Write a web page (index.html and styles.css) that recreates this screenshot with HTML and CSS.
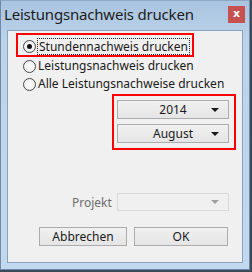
FILE: index.html
```html
<!DOCTYPE html>
<html lang="de">
<head>
   <meta charset="UTF-8">
   <title>Leistungsnachweis drucken</title>
   <link rel="stylesheet" href="styles.css">
</head>
<body>
    <div class="window">
        <!-- Title bar -->
        <div class="titlebar">
            <span class="title">Leistungsnachweis drucken</span>
            <span class="close">x</span>
        </div>

        <div class="client">
            <!-- Report type -->
            <div class="highlight first">
                <label class="option">
                    <span class="radio checked"></span>
                    <span class="focus">Stundennachweis drucken</span>
                </label>
            </div>
            <label class="option">
                <span class="radio"></span>
                <span>Leistungsnachweis drucken</span>
            </label>
            <label class="option">
                <span class="radio"></span>
                <span>Alle Leistungsnachweise drucken</span>
            </label>

            <!-- Period -->
            <div class="highlight period">
                <div class="combo"><span>2014</span><span class="arrow"></span></div>
                <div class="combo"><span>August</span><span class="arrow"></span></div>
            </div>

            <div class="project-row">
                <span class="project-label">Projekt</span>
                <div class="combo disabled"><span></span><span class="arrow"></span></div>
            </div>

            <div class="buttons">
                <button class="btn cancel">Abbrechen</button>
                <button class="btn ok">OK</button>
            </div>
        </div>
    </div>
</body>
</html>
```

FILE: styles.css
```css
* {
    margin: 0;
    padding: 0;
    box-sizing: border-box;
}

body {
    width: 252px;
    height: 272px;
    background-color: #3c4a58;
    font-family: "Noto Sans", sans-serif;
    font-size: 12px;
    color: #1a1a1a;
    overflow: hidden;
}

.window {
    width: 250px;
    height: 270px;
    background: linear-gradient(#a9c4e0, #bcd3ea 40px, #c2d8ee);
    border: 1px solid #6e8aa8;
    border-top-color: #8ea8c4;
    display: flex;
    flex-direction: column;
}

.titlebar {
    height: 29px;
    display: flex;
    align-items: flex-start;
    justify-content: space-between;
    padding: 2px 4px 0 3px;
}

.title {
    font-size: 15px;
    color: #1c1c1c;
    line-height: 22px;
    letter-spacing: -0.2px;
}

.close {
    width: 17px;
    height: 17px;
    margin-top: 3px;
    background-color: #c75050;
    color: white;
    font-family: "DejaVu Sans", sans-serif;
    font-weight: bold;
    font-size: 11px;
    line-height: 15px;
    text-align: center;
}

.client {
    margin: 0 6px 6px 6px;
    flex: 1;
    background-color: #f0f0f0;
    border: 1px solid #8aa4bf;
    padding-top: 2px;
    display: flex;
    flex-direction: column;
}

.highlight {
    border: 2px solid #ff0000;
}

.highlight.first {
    margin-left: 8px;
    width: 178px;
    height: 24px;
    padding-left: 5px;
    display: flex;
    align-items: center;
}

.option {
    display: flex;
    align-items: center;
    height: 18px;
    gap: 2px;
}

.client > .option {
    margin-left: 15px;
    line-height: 18px;
}

.highlight.first .option {
    margin-top: 2px;
}

.radio {
    width: 13px;
    height: 13px;
    border-radius: 50%;
    border: 1px solid #4a4a4a;
    background: radial-gradient(#ffffff, #e6e6e6);
    position: relative;
}

.radio.checked::after {
    content: "";
    position: absolute;
    left: 3px;
    top: 3px;
    width: 5px;
    height: 5px;
    border-radius: 50%;
    background-color: #111;
}

.focus {
    outline: 1px dotted #222;
    outline-offset: 0;
    padding: 0 1px;
    line-height: 15px;
}

.highlight.period {
    margin: 1px 0 0 104px;
    width: 124px;
    height: 56px;
    padding: 4px 0 0 3px;
    display: flex;
    flex-direction: column;
    gap: 5px;
}

.combo {
    width: 112px;
    height: 19px;
    border: 1px solid #acacac;
    background: linear-gradient(#f0f0f0, #e5e5e5);
    display: flex;
    align-items: center;
    justify-content: center;
    position: relative;
    font-size: 12px;
}

.arrow {
    position: absolute;
    right: 9px;
    top: 7px;
    width: 0;
    height: 0;
    border-left: 4px solid transparent;
    border-right: 4px solid transparent;
    border-top: 4px solid #1a1a1a;
}

.project-row {
    margin-top: 43px;
    display: flex;
    align-items: center;
    gap: 5px;
    padding-left: 64px;
}

.project-label {
    color: #6d6d6d;
}

.combo.disabled {
    height: 18px;
    background: #f0f0f0;
    border-color: #d9d9d9;
}

.combo.disabled .arrow {
    border-top-color: #a0a0a0;
    top: 6px;
}

.buttons {
    margin-top: 16px;
    display: flex;
    gap: 7px;
    padding-left: 31px;
}

.btn {
    height: 19px;
    border: 1px solid #acacac;
    background: linear-gradient(#f0f0f0, #e5e5e5);
    font-family: "Noto Sans", sans-serif;
    font-size: 12px;
    color: #1a1a1a;
}

.cancel {
    width: 88px;
}

.ok {
    width: 94px;
}
```
